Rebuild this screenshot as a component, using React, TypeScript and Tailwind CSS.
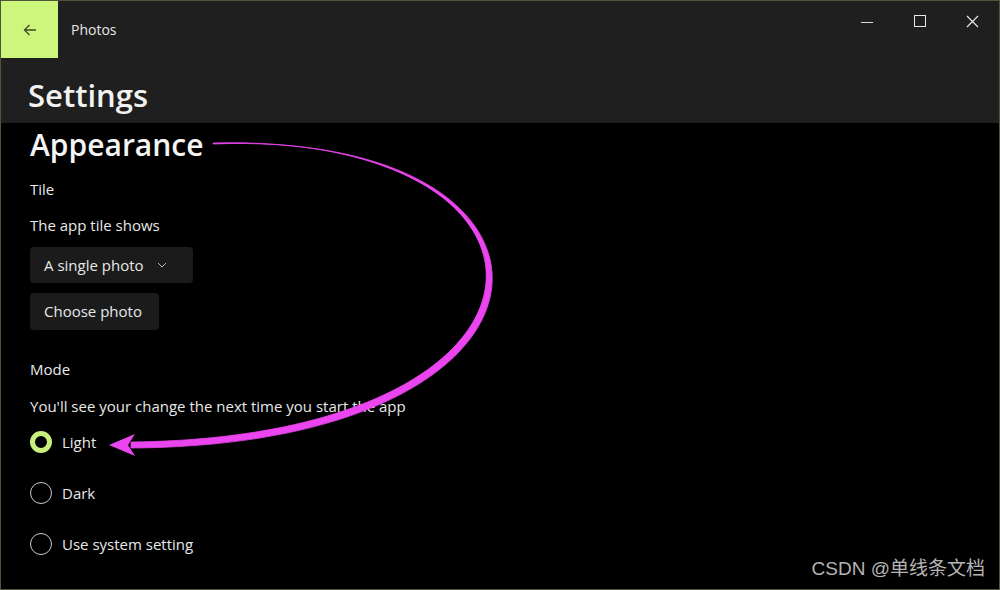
import React from "react";

const font = { fontFamily: '"Open Sans", "Noto Sans", sans-serif' };

function Radio({ checked, label }: { checked?: boolean; label: string }) {
  return (
    <div className="flex items-center h-[22px]">
      {checked ? (
        <div className="w-[22px] h-[22px] rounded-full border-[5px] border-[#c9f07c] bg-black" />
      ) : (
        <div className="w-[22px] h-[22px] rounded-full border border-[#c8c8c8] bg-black" />
      )}
      <span className="ml-[10px] text-[15px] text-[#e8e8e8]">{label}</span>
    </div>
  );
}

export default function App() {
  return (
    <div
      className="relative w-[1000px] h-[590px] overflow-hidden bg-black border border-[#50543a] flex flex-col"
      style={font}
    >
      {/* Title bar */}
      <div className="h-[57px] bg-[#1f1f1f] flex items-stretch shrink-0">
        <div className="w-[57px] bg-[#cdf67c] flex items-center justify-center">
          <svg width="16" height="16" viewBox="0 0 16 16" fill="none" stroke="#3d4a22" strokeWidth="1.3">
            <path d="M14 8H2.5M7.5 3L2.5 8l5 5" />
          </svg>
        </div>
        <div className="ml-[13px] flex items-center text-[14px] text-[#e6e6e6]">Photos</div>
        <div className="flex-1" />
        <div className="w-[53px] flex items-start justify-center pt-[14px]">
          <div className="w-[53px] h-[14px] flex items-center justify-center">
            <div className="w-[12px] h-px bg-[#d8d8d8] mt-[1px]" />
          </div>
        </div>
        <div className="w-[53px] flex items-start justify-center pt-[14px]">
          <div className="w-[12px] h-[12px] border border-[#e8e8e8]" />
        </div>
        <div className="w-[53px] flex items-start justify-center pt-[14px]">
          <svg width="13" height="13" viewBox="0 0 13 13" stroke="#ececec" strokeWidth="1.1">
            <path d="M1 1L12 12M12 1L1 12" />
          </svg>
        </div>
      </div>

      {/* Header */}
      <div className="h-[65px] bg-[#1f1f1f] shrink-0 flex items-center px-[27px] pt-[9px]">
        <span className="text-[31px] font-semibold text-[#f2f2f2] leading-none">Settings</span>
      </div>

      {/* Content */}
      <div className="flex flex-col pl-[29px] pt-[4px]">
        <div className="text-[30px] leading-[36px] font-semibold text-[#f4f4f4]">Appearance</div>
        <div className="mt-[16px] text-[15px] leading-[20px] text-[#e8e8e8]">Tile</div>
        <div className="mt-[16px] text-[15px] leading-[20px] text-[#e8e8e8]">The app tile shows</div>
        <div className="mt-[12px] w-[163px] h-[36px] rounded-[4px] bg-[#1b1b1b] flex items-center pl-[14px] text-[15px] text-[#e8e8e8]">
          <span>A single photo</span>
          <svg className="ml-[13px]" width="10" height="6" viewBox="0 0 10 6" fill="none" stroke="#bdbdbd" strokeWidth="1">
            <path d="M1 1l4 4 4-4" />
          </svg>
        </div>
        <div className="mt-[10px] w-[129px] h-[37px] rounded-[4px] bg-[#1b1b1b] flex items-center pl-[14px] text-[15px] text-[#e8e8e8]">
          Choose photo
        </div>
        <div className="mt-[29px] text-[15px] leading-[20px] text-[#e8e8e8]">Mode</div>
        <div className="mt-[17px] text-[15px] leading-[20px] text-[#e8e8e8]">
          You'll see your change the next time you start the app
        </div>
        <div className="mt-[15px] flex flex-col gap-[29px]">
          <Radio checked label="Light" />
          <Radio label="Dark" />
          <Radio label="Use system setting" />
        </div>
      </div>

      {/* Annotation arrow */}
      <svg className="absolute left-0 top-0 pointer-events-none" width="1000" height="590" viewBox="0 0 1000 590">
        <path
          d="M212 143 C596 128 598 444 130 447 L130 441 C589 436 589 132 212 142 Z"
          fill="#ea45ef"
          stroke="#ea45ef"
          strokeWidth="0.8"
        />
        <path d="M108 444 L134 433 L127 444 L134 455 Z" fill="#ea45ef" />
      </svg>

      {/* Watermark */}
      <div
        className="absolute right-[14px] bottom-[6px] text-[19px] text-[#b4b4b4]"
        style={{ fontFamily: '"Liberation Sans", "Noto Sans CJK SC", sans-serif' }}
      >
        CSDN @单线条文档
      </div>
    </div>
  );
}
